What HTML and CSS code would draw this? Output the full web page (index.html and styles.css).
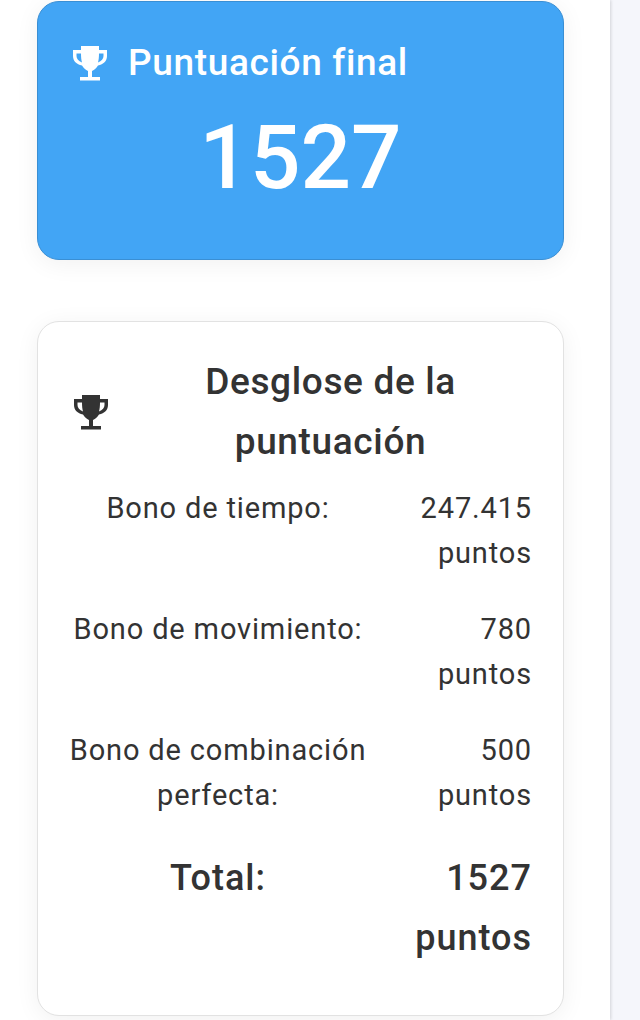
FILE: index.html
```html
<!DOCTYPE html>
<html lang="es">
<head>
    <meta charset="UTF-8">
    <meta name="viewport" content="width=device-width, initial-scale=1.0">
    <title>Puntuación final</title>
    <link rel="stylesheet" href="styles.css">
</head>
<body>

    <main class="sheet">
        <section class="card score-card">
            <h2 class="score-title">
                <svg class="trophy" viewBox="0 0 34 35"><path fill-rule="evenodd" d="M8 0h18v4h8v6c0 5-3.500 8.500-9 9.500-1.500 2.500-3.500 4.500-6 5.500v6h8v3.500H7V31h8v-6c-2.500-1-4.500-3-6-5.500C3.500 18.500 0 15 0 10V4h8zM8 7.500H3.500V10c0 2.800 2 5 5.500 6.500-.7-2.500-1-5.500-1-9zM26 7.500c0 3.500-.3 6.500-1 9 3.500-1.500 5.500-3.700 5.500-6.500V7.500z"/></svg>
                <span>Puntuación final</span>
            </h2>
            <div class="score-value">1527</div>
        </section>

        <section class="card detail-card">
            <h2 class="detail-title">
                <svg class="trophy" viewBox="0 0 34 35"><path fill-rule="evenodd" d="M8 0h18v4h8v6c0 5-3.500 8.500-9 9.500-1.500 2.500-3.500 4.500-6 5.500v6h8v3.500H7V31h8v-6c-2.500-1-4.500-3-6-5.500C3.500 18.500 0 15 0 10V4h8zM8 7.500H3.500V10c0 2.800 2 5 5.500 6.500-.7-2.500-1-5.500-1-9zM26 7.500c0 3.500-.3 6.500-1 9 3.500-1.500 5.500-3.700 5.500-6.500V7.500z"/></svg>
                <span>Desglose de la puntuación</span>
            </h2>
            <div class="rows">
                <div class="label">Bono de tiempo:</div>
                <div class="value">247.415 puntos</div>
                <div class="label">Bono de movimiento:</div>
                <div class="value">780 puntos</div>
                <div class="label">Bono de combinación perfecta:</div>
                <div class="value">500 puntos</div>
                <div class="label total">Total:</div>
                <div class="value total">1527 puntos</div>
            </div>
        </section>
    </main>

</body>
</html>
```

FILE: styles.css
```css
html, body {
    margin: 0;
    height: 1020px;
    overflow: hidden;
}
body {
    font-family: Roboto, "Liberation Sans", sans-serif;
    letter-spacing: 0.64px;
    background: #f5f6fb;
    color: #333;
}
.sheet {
    width: 610px;
    height: 1020px;
    box-sizing: border-box;
    padding: 1px 46px 0 37px;
    background: white;
    box-shadow: 1px 0 3px rgba(0,0,0,0.14);
}
.card {
    box-sizing: border-box;
    border-radius: 22px;
    box-shadow: 0 4px 24px rgba(0,0,0,0.06);
}
.trophy {
    width: 34px;
    height: 35px;
    flex: none;
    margin-right: 21px;
    fill: currentColor;
}
.score-card {
    height: 259px;
    padding: 36px 35px 0;
    background: #42a5f5;
    border: 1px solid #3a8fd4;
    color: white;
}
.score-title {
    display: flex;
    align-items: center;
    margin: 0;
    font-size: 37px;
    font-weight: 500;
    line-height: 50px;
}
.score-title .trophy {
    margin-top: 1px;
}
.score-value {
    margin-top: 18px;
    font-size: 89px;
    font-weight: 500;
    letter-spacing: 0;
    line-height: 104px;
    text-align: center;
}
.detail-card {
    height: 695px;
    margin-top: 61px;
    padding: 30px 31px 0 28px;
    background: white;
    border: 1px solid #e2e2e2;
}
.detail-title {
    display: flex;
    align-items: center;
    margin: 0 0 14px;
    padding-left: 8px;
    font-size: 37px;
    font-weight: 500;
    line-height: 60px;
    text-align: center;
}
.rows {
    display: grid;
    grid-template-columns: 304px 1fr;
    row-gap: 31px;
    font-size: 29px;
    letter-spacing: 0.85px;
    line-height: 45px;
}
.label {
    text-align: center;
}
.value {
    padding-left: 30px;
    text-align: right;
}
.total {
    margin-top: -1px;
    font-size: 36px;
    font-weight: 500;
    letter-spacing: 1px;
    line-height: 60px;
}
.value.total {
    padding-left: 20px;
}
```
